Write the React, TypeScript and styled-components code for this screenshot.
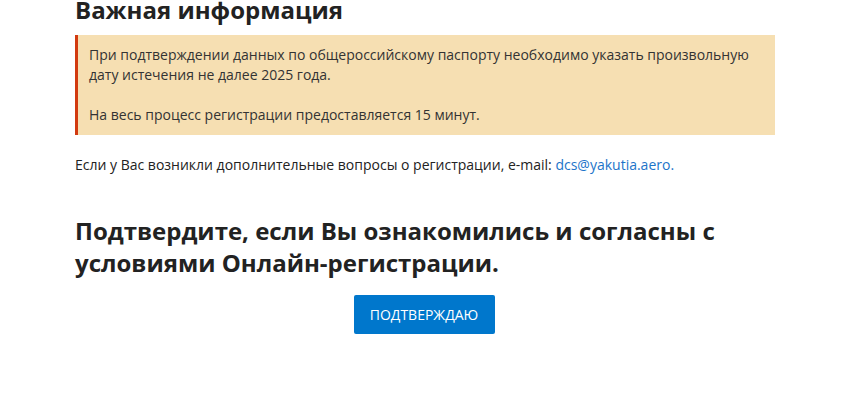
import styled, { createGlobalStyle } from 'styled-components';

const GlobalStyle = createGlobalStyle`
  html, body {
    margin: 0;
    padding: 0;
    background: #fff;
    font-family: "Open Sans", "Noto Sans", sans-serif;
    color: #222;
    overflow: hidden;
  }
`;

export default function App() {
  return (
    <>
      <GlobalStyle />
      <Page>
        <Title>Важная информация</Title>
        <Notice>
          <p>
            При подтверждении данных по общероссийскому паспорту необходимо указать произвольную
            дату истечения не далее 2025 года.
          </p>
          <p>На весь процесс регистрации предоставляется 15 минут.</p>
        </Notice>
        <Contact>
          Если у Вас возникли дополнительные вопросы о регистрации, e-mail:{' '}
          <a href="mailto:dcs@yakutia.aero">dcs@yakutia.aero.</a>
        </Contact>
        <Question>
          Подтвердите, если Вы ознакомились и согласны с условиями Онлайн-регистрации.
        </Question>
        <Actions>
          <ConfirmButton type="button">ПОДТВЕРЖДАЮ</ConfirmButton>
        </Actions>
      </Page>
    </>
  );
}

const Page = styled.div`
  width: 700px;
  margin-left: 75px;
  margin-top: -6px;
`;

const Title = styled.h2`
  margin: 0 0 9px;
  font-size: 24px;
  line-height: 32px;
  font-weight: 700;
  color: #222;
`;

const Notice = styled.div`
  background: #f6dfb2;
  border-left: 3px solid #d23a10;
  padding: 10px 14px 10px 11px;
  font-size: 14px;
  line-height: 20px;
  color: #333;

  p {
    margin: 0;
  }

  p + p {
    margin-top: 20px;
  }
`;

const Contact = styled.p`
  margin: 20px 0 0;
  font-size: 14px;
  line-height: 20px;
  color: #222;

  a {
    color: #1c74c9;
    text-decoration: none;
  }
`;

const Question = styled.h2`
  margin: 40px 0 0;
  font-size: 24px;
  line-height: 32px;
  font-weight: 700;
  color: #222;
  max-width: 660px;
`;

const Actions = styled.div`
  display: flex;
  justify-content: center;
  margin-top: 16px;
`;

const ConfirmButton = styled.button`
  width: 141px;
  height: 39px;
  margin-right: 2px;
  border: none;
  border-radius: 2px;
  background: #0077cc;
  color: #fff;
  font-family: "Open Sans", "Noto Sans", sans-serif;
  font-size: 14px;
  cursor: pointer;
`;
